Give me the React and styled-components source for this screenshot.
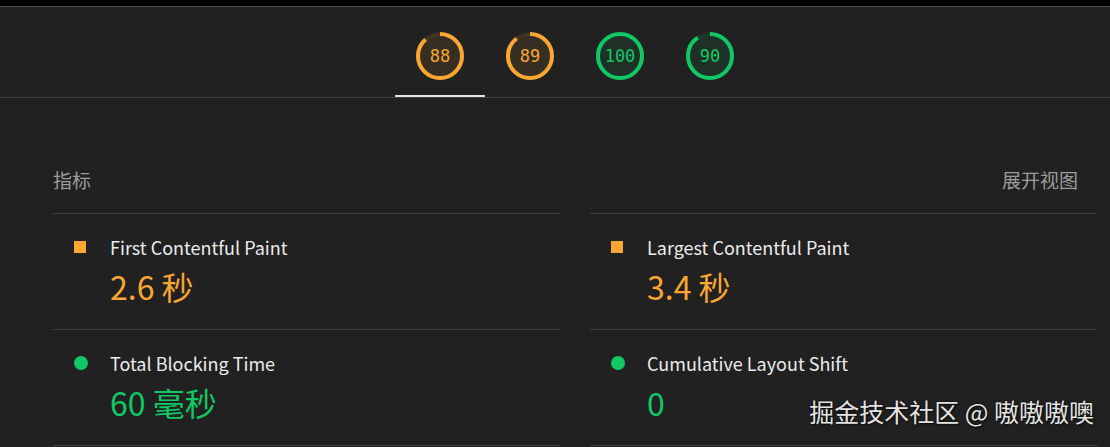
import React from 'react';
import styled, { createGlobalStyle } from 'styled-components';

const ORANGE = '#f9a632';
const GREEN = '#10c864';

const GlobalStyle = createGlobalStyle`
  html, body { margin: 0; padding: 0; background: #212121; }
  body { font-family: "Noto Sans CJK SC", "Noto Sans", sans-serif; }
`;

const Page = styled.div`
  position: relative;
  width: 1110px;
  height: 447px;
  overflow: hidden;
  background: #212121;
`;

const TopStrip = styled.div`
  height: 6px;
  background: #000;
  border-bottom: 1px solid #4c4c4c;
`;

const ScoreBar = styled.nav`
  display: flex;
  justify-content: center;
  padding-left: 40px;
  border-bottom: 1px solid #3e3e3e;
`;

const Tab = styled.a`
  box-sizing: border-box;
  width: 90px;
  height: 90px;
  padding-top: 8px;
  display: flex;
  align-items: center;
  justify-content: center;
  cursor: pointer;
  box-shadow: ${(p) => (p.$active ? 'inset 0 -2px 0 #e6e6e6' : 'none')};
`;

const GaugeWrap = styled.div`
  display: grid;
  width: 48px;
  height: 48px;
  & > * { grid-area: 1 / 1; }
`;

const GaugeSvg = styled.svg`
  width: 48px;
  height: 48px;
`;

const GaugeLabel = styled.span`
  display: flex;
  align-items: center;
  justify-content: center;
  font-family: "DejaVu Sans Mono", "Liberation Mono", monospace;
  font-size: 17px;
  color: ${(p) => p.$color};
`;

const Metrics = styled.section`
  padding: 68px 13px 0 53px;
`;

const MetricsHeader = styled.div`
  display: flex;
  justify-content: space-between;
  align-items: center;
  height: 26px;
  margin-bottom: 21px;
  padding-right: 19px;
  font-size: 19px;
  color: #9c9c9c;
`;

const Toggle = styled.span`
  cursor: pointer;
`;

const MetricGrid = styled.div`
  display: grid;
  grid-template-columns: 1fr 1fr;
  column-gap: 30px;
`;

const MetricCell = styled.div`
  box-sizing: content-box;
  height: 95px;
  padding: 20px 0 0 21px;
  display: grid;
  grid-template-columns: 36px 1fr;
  grid-template-rows: 26px auto;
  border-bottom: 1px solid #3e3e3e;
  &:nth-child(-n + 2) { border-top: 1px solid #3e3e3e; }
`;

const IconSlot = styled.div`
  display: flex;
  align-items: center;
`;

const ScoreIcon = styled.span`
  display: block;
  width: ${(p) => (p.$shape === 'circle' ? 14 : 12)}px;
  height: ${(p) => (p.$shape === 'circle' ? 14 : 12)}px;
  border-radius: ${(p) => (p.$shape === 'circle' ? '50%' : '0')};
  background: ${(p) => p.$color};
`;

const MetricTitle = styled.div`
  font-size: 18px;
  line-height: 26px;
  color: #ebebeb;
`;

const MetricValue = styled.div`
  grid-column: 2;
  margin-top: 8px;
  font-size: 32px;
  line-height: 36px;
  color: ${(p) => p.$color};
`;

const Watermark = styled.div`
  position: absolute;
  right: 16px;
  top: 395px;
  font-size: 25px;
  line-height: 32px;
  color: #e4e4e4;
  text-shadow: 0 0 2px rgba(0, 0, 0, 0.8), 1px 1px 2px rgba(0, 0, 0, 0.6);
  white-space: nowrap;
`;

function Gauge({ score, color }) {
  const r = 22;
  const c = 2 * Math.PI * r;
  return (
    <GaugeWrap>
      <GaugeSvg viewBox="0 0 48 48">
        <circle cx="24" cy="24" r={r} fill={color} fillOpacity="0.1" stroke={color} strokeOpacity="0.1" strokeWidth="4" />
        <circle
          cx="24"
          cy="24"
          r={r}
          fill="none"
          stroke={color}
          strokeWidth="4"
          strokeDasharray={`${(score / 100) * c} ${c}`}
          transform="rotate(-90 24 24)"
        />
      </GaugeSvg>
      <GaugeLabel $color={color}>{score}</GaugeLabel>
    </GaugeWrap>
  );
}

const scores = [
  { score: 88, color: ORANGE, active: true },
  { score: 89, color: ORANGE },
  { score: 100, color: GREEN },
  { score: 90, color: GREEN },
];

const metrics = [
  { title: 'First Contentful Paint', value: '2.6 秒', color: ORANGE, shape: 'square' },
  { title: 'Largest Contentful Paint', value: '3.4 秒', color: ORANGE, shape: 'square' },
  { title: 'Total Blocking Time', value: '60 毫秒', color: GREEN, shape: 'circle' },
  { title: 'Cumulative Layout Shift', value: '0', color: GREEN, shape: 'circle' },
];

export default function App() {
  return (
    <Page>
      <GlobalStyle />
      <TopStrip />
      <ScoreBar>
        {scores.map((s) => (
          <Tab key={s.score} $active={s.active}>
            <Gauge score={s.score} color={s.color} />
          </Tab>
        ))}
      </ScoreBar>
      <Metrics>
        <MetricsHeader>
          <span>指标</span>
          <Toggle>展开视图</Toggle>
        </MetricsHeader>
        <MetricGrid>
          {metrics.map((m) => (
            <MetricCell key={m.title}>
              <IconSlot>
                <ScoreIcon $shape={m.shape} $color={m.color} />
              </IconSlot>
              <MetricTitle>{m.title}</MetricTitle>
              <MetricValue $color={m.color}>{m.value}</MetricValue>
            </MetricCell>
          ))}
        </MetricGrid>
      </Metrics>
      <Watermark>掘金技术社区 @ 嗷嗷嗷噢</Watermark>
    </Page>
  );
}
